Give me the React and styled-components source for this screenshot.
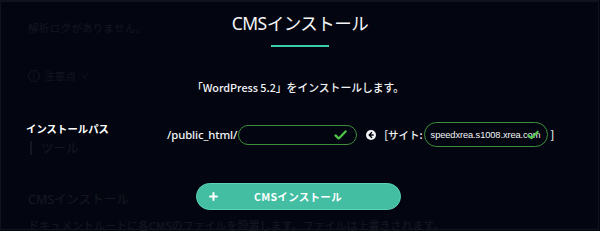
import React from "react";
import styled, { createGlobalStyle } from "styled-components";

const Global = createGlobalStyle`
  html, body { margin: 0; padding: 0; background: #03060f; }
  body { width: 600px; height: 231px; overflow: hidden; font-family: "Noto Sans CJK JP", "Noto Sans", sans-serif; }
  #root { width: 600px; height: 231px; }
`;

const Stage = styled.div`
  position: relative;
  width: 600px;
  height: 231px;
  overflow: hidden;
  background: #03060f;
`;

const Page = styled.div`
  box-sizing: border-box;
  width: 599px;
  height: 230px;
  border: 1px solid #9aa1b2;
  border-top-width: 2px;
  background: #0a0f1e;
  padding: 17px 27px 0 27px;
  color: #c8ccd6;
  display: flex;
  flex-direction: column;
`;

const Muted = styled.div`
  font-size: 10.5px;
  line-height: 18px;
  letter-spacing: 0.3px;
  color: #aeb3c0;
  margin-top: ${(p) => p.$mt || 0}px;
  display: flex;
  align-items: center;
  gap: 4px;
`;

const InfoCircle = styled.span`
  width: 10px;
  height: 10px;
  border: 1px solid #aeb3c0;
  border-radius: 50%;
  font-size: 8px;
  line-height: 10px;
  text-align: center;
`;

const Chevron = styled.span`
  font-size: 8px;
`;

const ToolHead = styled.div`
  margin-top: 55px;
  display: flex;
  align-items: center;
  gap: 9px;
  font-size: 12.5px;
  line-height: 16px;
  color: #c8ccd6;
`;

const ToolBar = styled.span`
  width: 2px;
  height: 14px;
  background: #c8ccd6;
  margin-left: 2px;
`;

const Rule = styled.div`
  height: 1px;
  background: #8b91a0;
  margin-top: 16px;
`;

const SectionTitle = styled.div`
  margin-top: 20px;
  font-size: 12.5px;
  line-height: 16px;
  font-family: "Noto Sans", "Noto Sans CJK JP", sans-serif;
  color: #c8ccd6;
`;

const ShortRule = styled.div`
  width: 8px;
  height: 1px;
  background: #8b91a0;
  margin-top: 5px;
`;

const Para = styled.div`
  margin-top: 4px;
  font-size: 11px;
  line-height: 16px;
  color: #c8ccd6;
`;

const Overlay = styled.div`
  position: absolute;
  inset: 0;
  background: rgba(3, 6, 15, 0.915);
  display: flex;
  flex-direction: column;
  align-items: center;
  color: #fff;
`;

const Title = styled.h1`
  margin: 10px 0 0 0;
  font-family: "Noto Sans", "Noto Sans CJK JP", sans-serif;
  font-weight: 400;
  font-size: 17.5px;
  line-height: 26px;
  letter-spacing: -0.5px;
  color: #f4f5f7;
`;

const Accent = styled.div`
  width: 58px;
  height: 2px;
  background: #3ccbab;
  margin-top: 9px;
`;

const Lead = styled.p`
  margin: 32px 0 0 -4px;
  font-size: 10.8px;
  font-weight: 500;
  line-height: 16px;
  letter-spacing: 0;
  color: #f2f3f5;
`;

const FormRow = styled.div`
  align-self: stretch;
  display: flex;
  align-items: center;
  margin-top: 27px;
  padding-left: 26px;
  height: 25px;
`;

const Label = styled.div`
  width: 141px;
  font-size: 10.3px;
  font-weight: 700;
  color: #fff;
  align-self: flex-start;
  margin-top: -1px;
  letter-spacing: 0.1px;
`;

const Prefix = styled.span`
  font-family: "Noto Sans", sans-serif;
  font-size: 11.3px;
  font-weight: 500;
  color: #f4f5f7;
  letter-spacing: -0.1px;
  margin-right: 1px;
`;

const Field = styled.div`
  box-sizing: border-box;
  position: relative;
  width: ${(p) => p.$w}px;
  height: ${(p) => p.$h}px;
  border: 1.5px solid #3d8e3b;
  border-radius: ${(p) => p.$h / 2}px;
  display: flex;
  align-items: center;
  padding-left: 6px;
  margin-top: ${(p) => p.$mt || 0}px;
`;

const FieldText = styled.span`
  font-family: "Liberation Sans", Arial, sans-serif;
  font-size: 9.3px;
  color: #f4f5f7;
  letter-spacing: -0.1px;
`;

const Check = styled.svg`
  position: absolute;
  right: ${(p) => p.$r}px;
  top: 50%;
  transform: translateY(-50%);
`;

const BackIcon = styled.svg`
  margin: 0 8px 0 9px;
`;

const Bracket = styled.span`
  font-size: 10.5px;
  color: #f4f5f7;
  font-weight: 500;
  letter-spacing: 0;
  margin-right: ${(p) => p.$mr || 0}px;
  margin-left: ${(p) => p.$ml || 0}px;
`;

const Button = styled.button`
  box-sizing: border-box;
  margin-top: 36px;
  width: 205px;
  height: 27px;
  border-radius: 14px;
  border: 1px solid #5fd3b9;
  background: #43bea3;
  color: #fff;
  font-family: "Noto Sans CJK JP", sans-serif;
  font-size: 10.5px;
  font-weight: 700;
  display: flex;
  align-items: center;
  padding: 0 0 0 12px;
  margin-left: -3px;
  letter-spacing: 0.3px;
  box-shadow: 0 1px 2px rgba(0, 0, 0, 0.4);
`;

const ButtonLabel = styled.span`
  flex: 1;
  text-align: center;
  margin-right: 22px;
  margin-top: -1px;
`;

const CheckMark = ({ r, size = 13 }) => (
  <Check $r={r} width={size} height={size * 0.8} viewBox="0 0 13 10.4">
    <path d="M1.5 5.6 L4.8 8.8 L11.6 1.6" fill="none" stroke="#4fc64a" strokeWidth="2.2" strokeLinecap="round" strokeLinejoin="round" />
  </Check>
);

export default function App() {
  return (
    <>
      <Global />
      <Stage>
        <Page>
          <Muted>解析ログがありません。</Muted>
          <Muted $mt={30}>
            <InfoCircle>!</InfoCircle> 注意点 <Chevron>∨</Chevron>
          </Muted>
          <ToolHead>
            <ToolBar />
            ツール
          </ToolHead>
          <Rule />
          <SectionTitle>CMSインストール</SectionTitle>
          <ShortRule />
          <Para>ドキュメントルートに各CMSのファイルを設置します。ファイルは上書きされます。</Para>
        </Page>
        <Overlay>
          <Title>CMSインストール</Title>
          <Accent />
          <Lead>「WordPress 5.2」をインストールします。</Lead>
          <FormRow>
            <Label>インストールパス</Label>
            <Prefix>/public_html/</Prefix>
            <Field $w={119} $h={20} $mt={1}>
              <CheckMark r={9} />
            </Field>
            <BackIcon width="10" height="10" viewBox="0 0 10 10">
              <circle cx="5" cy="5" r="5" fill="#f4f5f7" />
              <path d="M5.6 2.6 L3.2 5 L5.6 7.4 M3.4 5 H7.2" fill="none" stroke="#03060f" strokeWidth="1.4" strokeLinecap="round" strokeLinejoin="round" />
            </BackIcon>
            <Bracket $mr={1}>[サイト:</Bracket>
            <Field $w={124} $h={25}>
              <FieldText>speedxrea.s1008.xrea.com</FieldText>
              <CheckMark r={8} size={12} />
            </Field>
            <Bracket $ml={3}>]</Bracket>
          </FormRow>
          <Button>
            <svg width="9" height="9" viewBox="0 0 9 9">
              <path d="M4.5 1 V8 M1 4.5 H8" stroke="#fff" strokeWidth="2" strokeLinecap="round" />
            </svg>
            <ButtonLabel>CMSインストール</ButtonLabel>
          </Button>
        </Overlay>
      </Stage>
    </>
  );
}
